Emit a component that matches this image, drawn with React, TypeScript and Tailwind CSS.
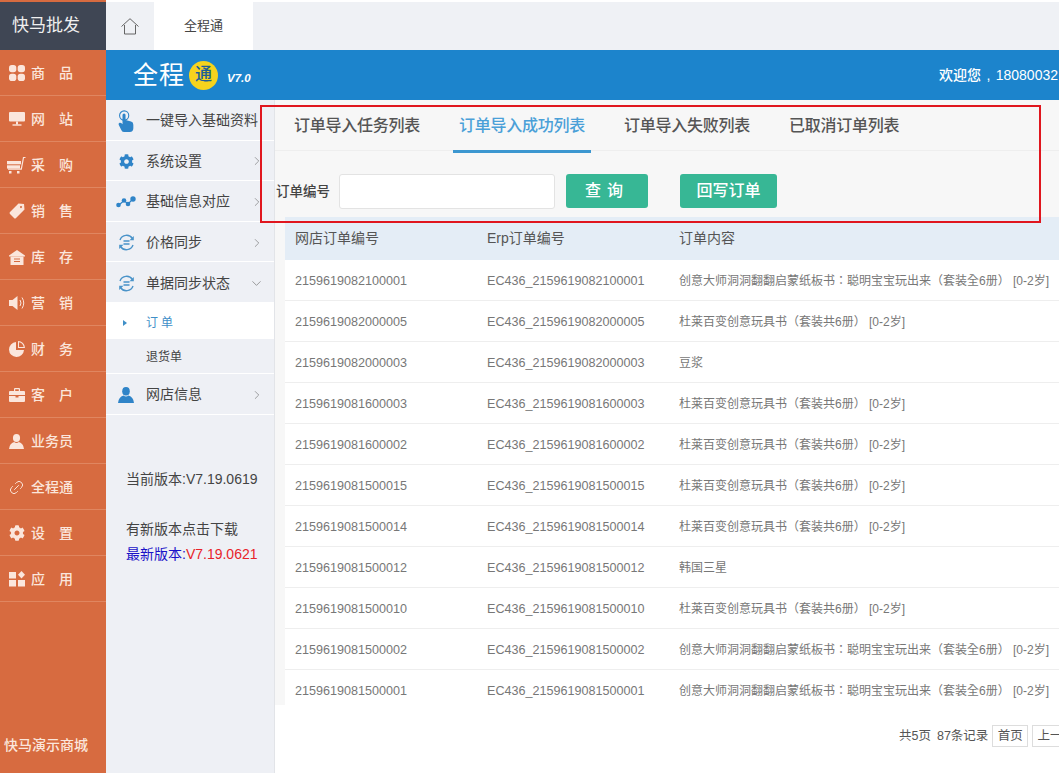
import React from "react";
import { FaCog } from "react-icons/fa";
import { ChevronRight, ChevronDown, Link2 } from "lucide-react";

const font = "font-['Liberation_Sans','Noto_Sans_CJK_SC',sans-serif]";

const GoodsIcon = () => (
  <svg width="16" height="16" viewBox="0 0 16 16" fill="currentColor">
    <rect x="0" y="0" width="7.300" height="7.300" rx="2.800" />
    <rect x="8.700" y="0" width="7.300" height="7.300" rx="2.800" />
    <rect x="0" y="8.700" width="7.300" height="7.300" rx="2.800" />
    <rect x="8.700" y="8.700" width="7.300" height="7.300" rx="2.800" />
  </svg>
);

const MonitorIcon = () => (
  <svg width="16" height="14" viewBox="0 0 16 14" fill="currentColor">
    <rect x="0" y="0" width="16" height="9.500" rx="1" />
    <rect x="7" y="9.500" width="2" height="3" />
    <rect x="3.500" y="12.300" width="9" height="1.400" />
  </svg>
);

const CartIcon = () => (
  <svg width="19" height="18" viewBox="0 0 19 18" fill="currentColor">
    <rect x="0" y="5" width="14" height="3.300" />
    <rect x="0" y="9.300" width="13" height="3.300" />
    <path d="M13.800 12.600 L16 1 H18.500 V2 H17 L14.800 13.800 H1 V12.600 Z" />
    <rect x="2" y="15" width="2.500" height="2.500" />
    <rect x="10" y="15" width="2.500" height="2.500" />
  </svg>
);

const TagIcon = () => (
  <svg width="16" height="16" viewBox="0 0 16 16" fill="currentColor">
    <path
      fillRule="evenodd"
      d="M9.500 0.500 L15 1 L15.500 6.500 L7 15 Q6 16 5 15 L1 11 Q0 10 1 9 Z M12 3 A1 1 0 1 0 12.010 3 Z"
    />
  </svg>
);

const StockIcon = () => (
  <svg width="16" height="15" viewBox="0 0 16 15" fill="currentColor">
    <path d="M8 0 L16 5.500 V6.500 H0 V5.500 Z" />
    <path
      fillRule="evenodd"
      d="M1.500 6.500 H14.500 V15 H1.500 Z M5 8.500 V9.500 H11 V8.500 Z M5 11 V12 H11 V11 Z"
    />
  </svg>
);

const SoundIcon = () => (
  <svg width="16" height="16" viewBox="0 0 16 16" fill="currentColor">
    <path d="M0 5 H3.500 L8.500 1 V15 L3.500 11 H0 Z" />
    <path d="M11 5 Q13 8 11 11" fill="none" stroke="currentColor" strokeWidth="1" />
    <path d="M13 2.500 Q16.500 8 13 13.500" fill="none" stroke="currentColor" strokeWidth="1" />
  </svg>
);

const PieIcon = () => (
  <svg width="16" height="16" viewBox="0 0 16 16" fill="currentColor">
    <path d="M7 1 V9 H15 A7.500 7.500 0 1 1 7 1 Z" />
    <path d="M9 0 A7 7 0 0 1 16 7 H9 Z M10 1.300 V6 H14.700 A6 6 0 0 0 10 1.300 Z" fillRule="evenodd" />
  </svg>
);

const CaseIcon = () => (
  <svg width="16" height="14" viewBox="0 0 16 14" fill="currentColor">
    <path
      fillRule="evenodd"
      d="M5 3 V1 Q5 0 6 0 H10 Q11 0 11 1 V3 H15 Q16 3 16 4 V7 H0 V4 Q0 3 1 3 Z M6.200 1.200 V3 H9.800 V1.200 Z"
    />
    <path d="M0 8 H6.500 V9.500 H9.500 V8 H16 V13 Q16 14 15 14 H1 Q0 14 0 13 Z" />
  </svg>
);

const PersonIcon = ({ size = 15 }: { size?: number }) => (
  <svg width={size} height={size} viewBox="0 0 16 16" fill="currentColor">
    <ellipse cx="8" cy="4.300" rx="3.800" ry="4.300" />
    <path d="M5.500 8.500 Q8 10.500 10.500 8.500 Q15.500 10 16 16 H0 Q0.500 10 5.500 8.500 Z" />
  </svg>
);

const AppsIcon = () => (
  <svg width="16" height="16" viewBox="0 0 16 16" fill="currentColor">
    <rect x="0" y="1" width="7" height="6.500" />
    <rect x="0" y="9" width="7" height="6.500" />
    <rect x="9" y="9" width="7" height="6.500" />
    <path d="M12.500 0 L16 3.800 L12.500 7.600 L9 3.800 Z" />
  </svg>
);

const HomeIcon = () => (
  <svg width="18" height="17" viewBox="0 0 18 17" fill="none" stroke="#555" strokeWidth="0.900">
    <path d="M0.500 8.500 L9 0.700 L17.500 8.500" />
    <path d="M3.500 7 V16 H14.500 V7" />
  </svg>
);

const HandIcon = () => (
  <svg width="16" height="22" viewBox="0 0 17 24" fill="currentColor">
    <circle cx="6.500" cy="6" r="5" fill="none" stroke="currentColor" strokeWidth="1.200" />
    <path d="M4.700 5.500 Q4.700 3.700 6.400 3.700 Q8 3.700 8 5.500 V11 L14 12.500 Q16.500 13 16.500 16 V20 Q16.500 24 12.500 24 H6.500 Q4.500 24 3.500 22 L0.500 16 Q0 14.500 1.500 14 Q3 13.700 4.700 15.500 Z" />
  </svg>
);

const DotsIcon = () => (
  <svg width="20" height="12" viewBox="0 0 20 12" fill="none" stroke="currentColor" strokeWidth="1.200">
    <path d="M3 9 L8 4.500 L12 8 L17 3" />
    <g fill="currentColor" stroke="none">
      <circle cx="2.500" cy="9" r="2.300" />
      <circle cx="8" cy="4.500" r="2.300" />
      <circle cx="12" cy="8" r="2.300" />
      <circle cx="17" cy="3" r="2.700" />
    </g>
  </svg>
);

const SyncIcon = () => (
  <svg width="17" height="17" viewBox="0 0 17 17" fill="none" stroke="#4a93c9" strokeWidth="1.400">
    <path d="M2 6 A7 7 0 0 1 14.500 4.500" />
    <path d="M15 11 A7 7 0 0 1 2.500 12.500" />
    <path d="M5.500 7 H11.500 M5.500 10 H11.500" />
    <path d="M15.800 2 V6.300 H11.500 Z" fill="#4a93c9" stroke="none" />
    <path d="M1.200 15 V10.700 H5.500 Z" fill="#4a93c9" stroke="none" />
  </svg>
);

const railItems = [
  { label: ["商", "品"], icon: <GoodsIcon /> },
  { label: ["网", "站"], icon: <MonitorIcon /> },
  { label: ["采", "购"], icon: <CartIcon /> },
  { label: ["销", "售"], icon: <TagIcon /> },
  { label: ["库", "存"], icon: <StockIcon /> },
  { label: ["营", "销"], icon: <SoundIcon /> },
  { label: ["财", "务"], icon: <PieIcon /> },
  { label: ["客", "户"], icon: <CaseIcon /> },
  { label: ["业务员"], icon: <PersonIcon /> },
  { label: ["全程通"], icon: <Link2 size={17} strokeWidth={1.3} className="-rotate-45" /> },
  { label: ["设", "置"], icon: <FaCog size={16} /> },
  { label: ["应", "用"], icon: <AppsIcon /> },
];

const menuItems = [
  { label: "一键导入基础资料", icon: <HandIcon />, arrow: "" },
  { label: "系统设置", icon: <FaCog size={15} />, arrow: "right" },
  { label: "基础信息对应", icon: <DotsIcon />, arrow: "right" },
  { label: "价格同步", icon: <SyncIcon />, arrow: "right" },
  { label: "单据同步状态", icon: <SyncIcon />, arrow: "down" },
];

const tabs = ["订单导入任务列表", "订单导入成功列表", "订单导入失败列表", "已取消订单列表"];

const bookA = "创意大师洞洞翻翻启蒙纸板书：聪明宝宝玩出来（套装全6册） [0-2岁]";
const bookB = "杜莱百变创意玩具书（套装共6册） [0-2岁]";

const rows = [
  ["2159619082100001", bookA],
  ["2159619082000005", bookB],
  ["2159619082000003", "豆浆"],
  ["2159619081600003", bookB],
  ["2159619081600002", bookB],
  ["2159619081500015", bookB],
  ["2159619081500014", bookB],
  ["2159619081500012", "韩国三星"],
  ["2159619081500010", bookB],
  ["2159619081500002", bookA],
  ["2159619081500001", bookA],
];

function MenuRow({ item }: { item: (typeof menuItems)[number] }) {
  return (
    <div className="flex h-[40.6px] items-center border-b border-white pl-[11px] pt-[2px]">
      <div className="flex w-[29px] justify-center pr-[11px] text-[#2f84c8] [&>svg]:shrink-0">{item.icon}</div>
      <span className="whitespace-nowrap text-[14px] text-[#444]">{item.label}</span>
      {item.arrow === "right" && (
        <ChevronRight size={14} strokeWidth={1} className="ml-auto mr-[10px] text-[#666]" />
      )}
      {item.arrow === "down" && (
        <ChevronDown size={15} strokeWidth={1} className="ml-auto mr-[10px] text-[#666]" />
      )}
    </div>
  );
}

export default function App() {
  return (
    <div className={`${font} relative flex h-[773px] w-[1059px] overflow-hidden bg-white`}>
      {/* Left rail */}
      <div className="flex w-[106px] shrink-0 flex-col bg-[#d76b40]">
        <div className="mt-[2px] flex h-[48px] items-center bg-[#3f4654] pl-[12px] text-[17px] text-[#f0f0f0]">
          快马批发
        </div>
        {railItems.map((item) => (
          <div
            key={item.label[0]}
            className="flex h-[46px] items-center border-b border-[#e08660] pl-[7px] pt-px text-[#fbe6dc]"
          >
            <div className="flex w-[19px] justify-center">{item.icon}</div>
            <div className="ml-[5px] flex w-[42px] justify-between text-[14px] font-medium">
              {item.label.map((t) => (
                <span key={t}>{t}</span>
              ))}
            </div>
          </div>
        ))}
        <div className="mt-auto mb-[17px] whitespace-nowrap pl-[4px] text-[14px] font-medium text-[#fbe6dc]">
          快马演示商城
        </div>
      </div>

      <div className="flex min-w-0 flex-1 flex-col">
        {/* Tab strip */}
        <div className="mt-[2px] flex h-[48px] shrink-0 items-center bg-[#eff1f5]">
          <div className="flex w-[48px] justify-center">
            <HomeIcon />
          </div>
          <div className="flex h-full w-[99px] items-center justify-center bg-white text-[13px] text-[#444]">
            全程通
          </div>
        </div>

        {/* Blue header */}
        <div className="flex h-[50px] shrink-0 items-center bg-[#1c84cc] pl-[27px]">
          <span className="text-[25px] leading-none tracking-[1px] text-white">全程</span>
          <span className="ml-[4px] flex h-[29px] w-[29px] items-center justify-center rounded-full bg-[#f6d31d] text-[17px] font-medium text-[#1d5f96]">
            通
          </span>
          <span className="ml-[9px] mt-[7px] text-[11.500px] font-bold italic text-white">V7.0</span>
          <span className="ml-auto mr-px whitespace-pre text-[14px] font-medium text-white [word-spacing:1.500px]">
            欢迎您 , 18080032
          </span>
        </div>

        <div className="flex min-h-0 flex-1">
          {/* Second column menu */}
          <div className="flex w-[169px] shrink-0 flex-col border-r border-[#e2e4e8] bg-[#eef0f5]">
            {menuItems.map((item) => (
              <MenuRow key={item.label} item={item} />
            ))}
            <div className="flex h-[36px] items-center bg-white pl-[40px] pt-[4px] text-[12px] text-[#3f8fc8]">
              <svg width="4" height="6" viewBox="0 0 4 6" fill="currentColor" className="-ml-[23px] mr-[19px]">
                <path d="M0 0 L4 3 L0 6 Z" />
              </svg>
              <span className="tracking-[3px]">订单</span>
            </div>
            <div className="flex h-[35px] items-center border-b border-white pl-[40px] pt-[2px] text-[12px] text-[#444]">
              退货单
            </div>
            <MenuRow item={{ label: "网店信息", icon: <PersonIcon size={16} />, arrow: "right" }} />
            <div className="mt-[54px] pl-[20px] text-[14px] text-[#444]">当前版本:V7.19.0619</div>
            <div className="mt-[29px] pl-[20px] text-[14px] text-[#444]">有新版本点击下载</div>
            <div className="mt-[4px] pl-[20px] text-[14px] text-[#1a12c8]">
              最新版本:<span className="text-[#e8232a]">V7.19.0621</span>
            </div>
          </div>

          {/* Content */}
          <div className="flex min-w-0 flex-1 flex-col">
            <div className="flex flex-col bg-[#f7f7f7]">
              <div className="flex h-[51px] gap-[27px] border-b border-[#eeeeee] pl-[13px]">
                {tabs.map((t, i) => (
                  <div
                    key={t}
                    className={`flex h-[53px] items-center whitespace-nowrap border-b-[3px] px-[6px] pt-[2px] text-[16px] font-medium tracking-[-0.250px] ${
                      i === 1 ? "border-[#3c97d0] text-[#4aa0d8]" : "border-transparent text-[#555]"
                    }`}
                  >
                    {t}
                  </div>
                ))}
              </div>
              <div className="flex h-[66px] items-start pt-[23px] pl-[1px]">
                <span className="mt-[8px] whitespace-nowrap text-[13.500px] font-medium text-[#444]">订单编号</span>
                <div className="ml-[9px] h-[35px] w-[216px] rounded-[3px] border border-[#e3e3e3] bg-white" />
                <button className="ml-[11px] h-[34px] w-[82px] rounded-[3px] bg-[#37b795] text-[16px] font-medium tracking-[6px] text-white">
                  查询
                </button>
                <button className="ml-[32px] h-[34px] w-[97px] rounded-[3px] bg-[#37b795] text-[16px] font-medium text-white">
                  回写订单
                </button>
              </div>
            </div>

            {/* Table */}
            <div className="flex h-[488px] overflow-hidden bg-[#f7f7f7] pl-[10px]">
              <div className="min-w-0 flex-1 bg-white">
                <div className="flex h-[43px] items-center bg-[#e4edf6] text-[14px] text-[#555]">
                  <div className="w-[192px] shrink-0 pl-[10px]">网店订单编号</div>
                  <div className="w-[192px] shrink-0 pl-[10px]">Erp订单编号</div>
                  <div className="pl-[10px]">订单内容</div>
                </div>
                {rows.map(([no, text]) => (
                  <div
                    key={no}
                    className="flex h-[41px] items-center whitespace-nowrap border-b border-[#eeeeee] pt-[2px] text-[12.600px] text-[#777]"
                  >
                    <div className="w-[192px] shrink-0 pl-[10px]">{no}</div>
                    <div className="w-[192px] shrink-0 pl-[10px]">EC436_{no}</div>
                    <div className="pl-[10px] font-['Liberation_Sans','Noto_Sans_CJK_TC',sans-serif] text-[12px]">{text}</div>
                  </div>
                ))}
              </div>
            </div>

            {/* Pagination */}
            <div className="mt-[20px] flex items-center whitespace-nowrap pl-[624px] text-[12.500px] text-[#555]">
              <span>共5页</span>
              <span className="ml-[6px]">87条记录</span>
              <span className="ml-[4px] flex h-[22px] w-[36px] shrink-0 items-center justify-center border border-[#ddd]">
                首页
              </span>
              <span className="ml-[4px] flex h-[22px] w-[48px] shrink-0 items-center justify-center border border-[#ddd]">
                上一页
              </span>
            </div>
          </div>
        </div>
      </div>

      {/* Red annotation box drawn over the screenshot */}
      <div className="pointer-events-none absolute left-[260px] top-[105px] h-[118px] w-[781px] border-2 border-[#e0161e]" />
    </div>
  );
}
